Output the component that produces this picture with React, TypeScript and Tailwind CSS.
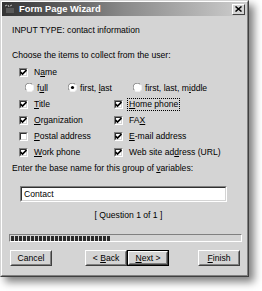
import React from "react";

const FONT = { fontFamily: '"Liberation Sans", Arial, sans-serif' };

function U({ children }: { children: React.ReactNode }) {
  return <span className="underline underline-offset-[1px] decoration-[0.8px]">{children}</span>;
}

function Check({ checked }: { checked: boolean }) {
  return (
    <div className="w-[9px] h-[9px] shrink-0 border border-t-[#808080] border-l-[#808080] border-r-white border-b-white">
      <div className="w-full h-full bg-white border border-t-[#303030] border-l-[#303030] border-r-[#d4d4d4] border-b-[#d4d4d4] flex items-center justify-center">
        {checked && (
          <svg width="7" height="7" viewBox="0 0 7 7" className="shrink-0">
            <path d="M0.5 3 L2.5 5 L6.5 1" stroke="#000" strokeWidth="1.7" fill="none" />
          </svg>
        )}
      </div>
    </div>
  );
}

function Radio({ checked }: { checked: boolean }) {
  return (
    <svg width="9" height="9" viewBox="0 0 9 9" className="shrink-0">
      <circle cx="4.5" cy="4.5" r="4" fill="#fff" />
      <path d="M1.3 7.2 A4 4 0 0 1 7.2 1.3" stroke="#808080" strokeWidth="1" fill="none" />
      <path d="M7.7 1.8 A4 4 0 0 1 1.8 7.7" stroke="#f4f4f4" strokeWidth="1" fill="none" />
      {checked && <circle cx="4.5" cy="4.5" r="1.6" fill="#000" />}
    </svg>
  );
}

function CheckRow({ checked, children, focus }: { checked: boolean; children: React.ReactNode; focus?: boolean }) {
  return (
    <div className="flex items-center">
      <Check checked={checked} />
      <span className={"leading-[11px] " + (focus ? "ml-[5px] outline outline-1 outline-dotted outline-[#000] px-[1px]" : "ml-[6px]")}>{children}</span>
    </div>
  );
}

function Button({ children, def }: { children: React.ReactNode; def?: boolean }) {
  return (
    <div className={"w-[42px] h-[16px] " + (def ? "border border-black" : "")}>
      <div className="w-full h-full border border-t-white border-l-white border-r-[#404040] border-b-[#404040]">
        <div className="w-full h-full border border-t-[#d4d4d4] border-l-[#d4d4d4] border-r-[#808080] border-b-[#808080] flex items-center justify-center leading-[10px]">
          <span className="whitespace-pre">{children}</span>
        </div>
      </div>
    </div>
  );
}

export default function App() {
  const blocks = Array.from({ length: 25 });
  return (
    <div className="w-[262px] h-[291px] bg-white" style={FONT}>
      <div className="w-[249px] h-[277px] shadow-[5px_5px_8px_rgba(0,0,0,0.5)] border border-t-[#d4d4d4] border-l-[#d4d4d4] border-r-[#404040] border-b-[#404040]">
        <div className="w-full h-full bg-[#d4d4d4] border border-t-white border-l-white border-r-[#808080] border-b-[#808080] flex flex-col text-[8.6px] text-black">
          {/* title bar */}
          <div className="h-[14px] flex items-center bg-gradient-to-r from-[#353535] via-[#8a8a8a] to-[#cfcfcf] px-[1px]">
            <svg width="12" height="10" viewBox="0 0 12 10" className="shrink-0 ml-[1px]">
              <path d="M1 2 L3 1 M4 1 L5 3 M6 2 L8 1" stroke="#bbb" strokeWidth="1" />
              <rect x="2" y="4" width="8" height="5" fill="#5a5a5a" />
            </svg>
            <span className="ml-[3px] text-white font-bold text-[9.4px] leading-[12px]">Form Page Wizard</span>
            <div className="ml-auto mr-[1px] w-[13px] h-[11px] border border-t-white border-l-white border-r-[#404040] border-b-[#404040] bg-[#d4d4d4] flex items-center justify-center">
              <svg width="7" height="6" viewBox="0 0 7 6">
                <path d="M0.5 0.5 L6.5 5.5 M6.5 0.5 L0.5 5.5" stroke="#000" strokeWidth="1.5" />
              </svg>
            </div>
          </div>

          <div className="pl-[10px] flex flex-col">
            <div className="h-[12px] mt-[8px] flex items-center"><span>INPUT TYPE: contact information</span></div>
            <div className="h-[12px] mt-[13px] flex items-center"><span>Choose the items to collect from the user:</span></div>

            <div className="mt-[3px] pl-[7px] grid grid-cols-[95px_1fr] auto-rows-[16px] items-center">
              <div className="col-span-2">
                <CheckRow checked>N<U>a</U>me</CheckRow>
              </div>
              <div className="col-span-2 flex items-center pl-[6px]">
                <Radio checked={false} />
                <span className="ml-[3px]">f<U>u</U>ll</span>
                <span className="ml-[20px] flex"><Radio checked /></span>
                <span className="ml-[3px] whitespace-pre">first, <U>l</U>ast</span>
                <span className="ml-[21px] flex"><Radio checked={false} /></span>
                <span className="ml-[3px] whitespace-pre">first, last, m<U>i</U>ddle</span>
              </div>
              <CheckRow checked><U>T</U>itle</CheckRow>
              <CheckRow checked focus><U>H</U>ome phone</CheckRow>
              <CheckRow checked><U>O</U>rganization</CheckRow>
              <CheckRow checked>FA<U>X</U></CheckRow>
              <CheckRow checked={false}><U>P</U>ostal address</CheckRow>
              <CheckRow checked><U>E</U>-mail address</CheckRow>
              <CheckRow checked><U>W</U>ork phone</CheckRow>
              <CheckRow checked>Web site ad<U>d</U>ress (URL)</CheckRow>
            </div>

            <div className="h-[12px] mt-[2px] flex items-center">
              <span className="whitespace-pre">Enter the base name for this group of <U>v</U>ariables:</span>
            </div>

            <div className="mt-[12px] ml-[8px] w-[207px] h-[16px] border border-t-[#808080] border-l-[#808080] border-r-white border-b-white">
              <div className="w-full h-full bg-white border border-t-[#303030] border-l-[#303030] border-r-[#d4d4d4] border-b-[#d4d4d4] flex items-center pl-[2px]">
                <span>Contact</span>
              </div>
            </div>
          </div>

          <div className="h-[12px] mt-[7px] flex items-center justify-center pl-[8px]"><span>[ Question 1 of 1 ]</span></div>

          <div className="mt-[13px] ml-[7px] w-[233px] h-[8px] border border-t-[#808080] border-l-[#808080] border-r-white border-b-white flex items-center pl-[1px] gap-[1px]">
            {blocks.map((_, i) => (
              <div key={i} className="w-[3px] h-[5px] bg-[#2a2a2a]" />
            ))}
          </div>

          <div className="mt-[8px] flex items-center pl-[8px]">
            <Button>Cancel</Button>
            <div className="ml-[33px] flex">
              <Button>&lt; <U>B</U>ack</Button>
              <Button def><U>N</U>ext &gt;</Button>
            </div>
            <div className="ml-[29px]">
              <Button><U>F</U>inish</Button>
            </div>
          </div>
        </div>
      </div>
    </div>
  );
}
